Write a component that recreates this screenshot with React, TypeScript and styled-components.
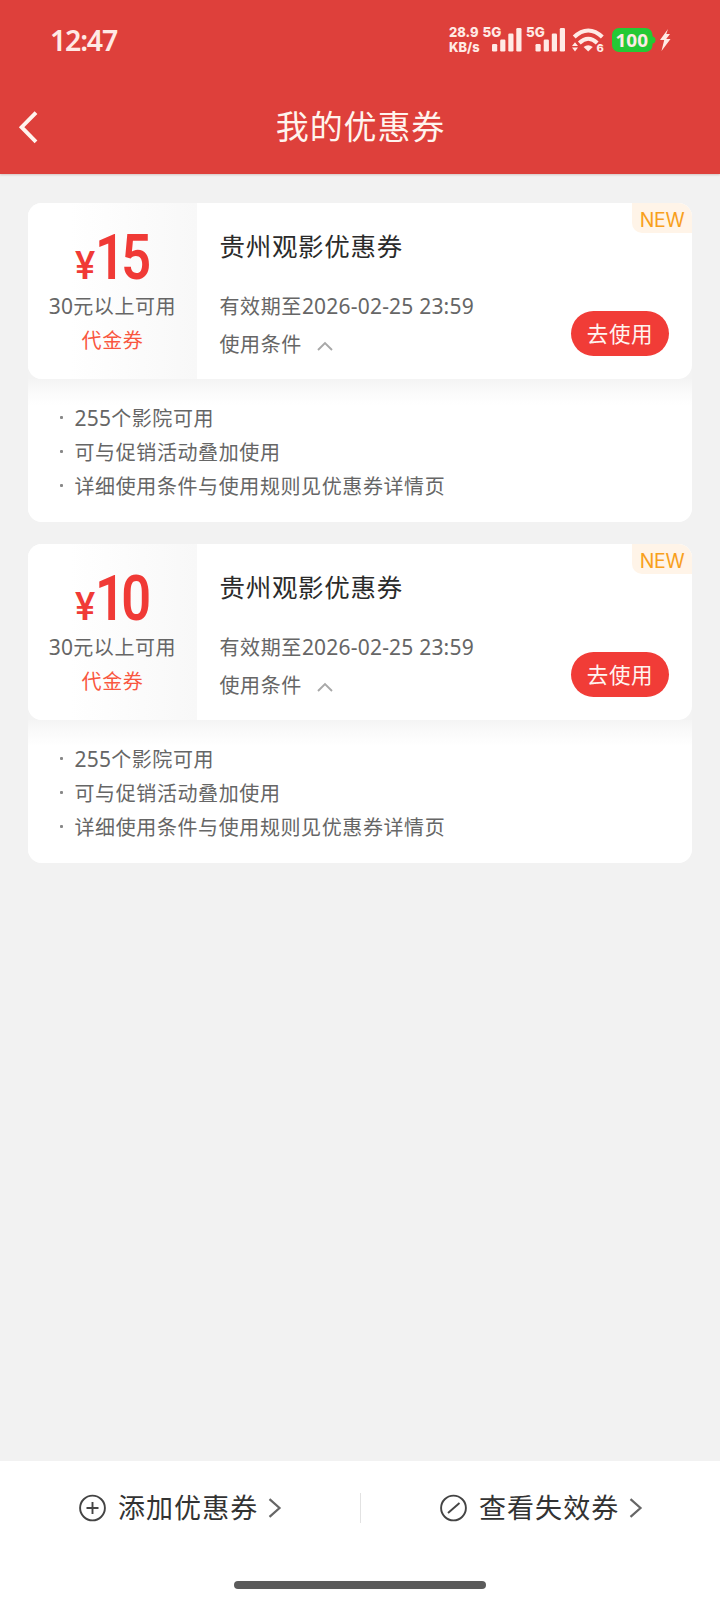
import React from "react";
import styled, { createGlobalStyle } from "styled-components";

const Global = createGlobalStyle`
  *, *::before, *::after { box-sizing: border-box; }
  body {
    margin: 0;
    background: #f2f2f2;
    font-family: "Noto Sans CJK SC", "Noto Sans", sans-serif;
  }
  button { font: inherit; border: 0; background: none; padding: 0; color: inherit; }
`;

const Screen = styled.div`
  width: 720px;
  height: 1600px;
  display: flex;
  flex-direction: column;
  background: #f2f2f2;
  overflow: hidden;
`;

const Header = styled.header`
  flex: none;
  height: 174px;
  background: #de403b;
  box-shadow: 0 1px 2px rgba(120, 60, 50, 0.25);
`;

const StatusBar = styled.div`
  height: 80px;
  padding: 0 48px 0 50px;
  display: flex;
  align-items: center;
  justify-content: space-between;
  color: #ffeae5;
`;

const Clock = styled.div`
  font: 600 28.5px/40px "Noto Sans", sans-serif;
  letter-spacing: -1.2px;
`;

const StatusIcons = styled.div`
  display: flex;
  height: 36px;
`;

const NavBar = styled.div`
  height: 94px;
  padding: 0 18px;
  display: grid;
  grid-template-columns: 22px 1fr 22px;
  align-items: center;
  color: #fff4ee;
`;

const NavTitle = styled.h1`
  margin: 0;
  text-align: center;
  font-size: 33px;
  font-weight: 400;
  line-height: 40px;
  letter-spacing: 0.9px;
  padding: 0 0 4px 1px;
`;

const BackButton = styled.button`
  display: flex;
`;

const List = styled.main`
  flex: 1;
  padding: 29px 28px 0 27.5px;
  display: flex;
  flex-direction: column;
  gap: 22.5px;
`;

const Coupon = styled.article`
  border-radius: 14px;
  background: #fff;
  height: 318.5px;
  display: flex;
  flex-direction: column;
`;

const Ticket = styled.div`
  flex: none;
  height: 176px;
  display: flex;
  border-radius: 14px;
  background: #fff;
  overflow: hidden;
`;

const Rules = styled.ul`
  margin: 0;
  padding: 21.5px 0 0 30px;
  flex: 1;
  list-style: none;
  border-radius: 0 0 14px 14px;
  background: linear-gradient(#f4f4f4, #fafafa 12px, #fff 26px);
`;

const TicketShell = styled.div`
  flex: none;
  border-radius: 14px 14px 0 0;
  background: #f3f3f3;
`;

const ValuePanel = styled.div`
  width: 169px;
  display: flex;
  flex-direction: column;
  align-items: center;
  background: linear-gradient(90deg, #fff 25%, #f8f8f8);
`;

const Amount = styled.div`
  height: 87px;
  display: flex;
  align-items: baseline;
  color: #f03a36;
  font-family: Roboto, sans-serif;
  font-weight: 500;
  line-height: 109px;
`;

const Currency = styled.span`
  font-size: 38px;
  font-weight: 500;
`;

const Digits = styled.span`
  font-size: 63px;
  font-weight: 600;
  letter-spacing: -4.5px;
  width: 54px;
  transform: scaleX(0.83);
  transform-origin: left;
`;

const Threshold = styled.div`
  height: 33px;
  padding-left: 1px;
  font-size: 20px;
  line-height: 32px;
  letter-spacing: 0.6px;
  color: #666;
  white-space: nowrap;
`;

const Kind = styled(Threshold)`
  color: #f9573f;
  line-height: 34px;
`;

const Num = styled.span`
  font-family: "Noto Sans", sans-serif;
  font-size: 21px;
  line-height: 0;
  letter-spacing: 0.2px;
`;

const Detail = styled.div`
  flex: 1;
  display: grid;
  grid-template-columns: 1fr auto;
  padding-left: 23px;
`;

const Info = styled.div`
  display: flex;
  flex-direction: column;
  padding-top: 23px;
`;

const CouponTitle = styled.h2`
  margin: 0;
  font-size: 25.5px;
  font-weight: 400;
  line-height: 37px;
  letter-spacing: 0.7px;
  color: #2b2b2b;
`;

const Meta = styled.div<{ $top: number }>`
  margin-top: ${(p) => p.$top}px;
  display: flex;
  align-items: center;
  height: 32px;
  font-size: 20px;
  line-height: 32px;
  letter-spacing: 0.6px;
  color: #666;
  white-space: nowrap;
`;

const MetaText = styled.span``;

const ChevronUp = styled.svg`
  margin: 4px 0 0 15.5px;
`;

const Side = styled.div`
  display: flex;
  flex-direction: column;
  justify-content: space-between;
  align-items: flex-end;
`;

const NewBadge = styled.span`
  width: 60px;
  height: 30px;
  border-radius: 0 0 0 10px;
  background: #fff4e8;
  color: #f8a01c;
  font: 400 19.5px/35px Inter, sans-serif;
  text-align: center;
  letter-spacing: -0.4px;
`;

const UseButton = styled.button`
  width: 98px;
  height: 45px;
  margin: 0 23px 23px 0;
  border-radius: 23px;
  background: #f13c37;
  color: #fff4f0;
  font-size: 21.5px;
  line-height: 42px;
  letter-spacing: 0.7px;
  text-align: center;
  padding-bottom: 2px;
`;

const Rule = styled.li`
  display: flex;
  height: 34px;
  line-height: 34px;
  font-size: 20px;
  letter-spacing: 0.6px;
  color: #666;

  &::before {
    content: "";
    width: 3px;
    height: 3px;
    border-radius: 1px;
    margin: 15.5px 11.5px 0 2.5px;
    background: #888;
  }
`;

const Footer = styled.footer`
  flex: none;
  height: 139px;
  background: #fff;
  display: flex;
  flex-direction: column;
  align-items: center;
  justify-content: space-between;
  padding-bottom: 11.5px;
`;

const Actions = styled.nav`
  width: 100%;
  height: 94px;
  display: grid;
  grid-template-columns: 360px 1px 1fr;
  align-items: center;
`;

const Divider = styled.i`
  height: 30px;
  background: #e2e2e2;
`;

const Action = styled.button`
  display: flex;
  align-items: center;
  padding-left: 78px;
  color: #333;
  font-size: 27px;
  line-height: 40px;
  letter-spacing: 1.05px;
`;

const ActionLabel = styled.span`
  margin: -2px 10px 0 11px;
`;

const HomeBar = styled.div`
  width: 252px;
  height: 7.5px;
  border-radius: 4px;
  background: #5b5b5b;
`;

const StatusGlyphs = () => (
  <svg width="230" height="36" viewBox="442 22 230 36" fill="#ffeae5">
    <g fontFamily="Inter, sans-serif" fontWeight="800">
      <text x="449" y="36.5" fontSize="13.6" textLength="29.5" lengthAdjust="spacingAndGlyphs">28.9</text>
      <text x="449" y="51.8" fontSize="13.6" textLength="30.5" lengthAdjust="spacingAndGlyphs">KB/s</text>
      <text x="482.5" y="36.5" fontSize="13.8" textLength="18.8" lengthAdjust="spacingAndGlyphs">5G</text>
      <text x="526" y="36.5" fontSize="13.8" textLength="18.8" lengthAdjust="spacingAndGlyphs">5G</text>
    </g>
    {[492, 535.5].map((x) => (
      <g key={x}>
        <rect x={x} y="44" width="5.2" height="7.4" rx="1.2" />
        <rect x={x + 8.2} y="39.5" width="5.2" height="11.9" rx="1.2" />
        <rect x={x + 16.3} y="33.5" width="5.2" height="17.9" rx="1.2" />
        <rect x={x + 24.3} y="28" width="5.2" height="23.4" rx="1.2" />
      </g>
    ))}
    <g fill="none" stroke="#ffeae5" strokeWidth="4">
      <path d="M574.2 37C583 28.2 593.5 28.2 602.3 37" />
      <path d="M579.3 43C585 37.4 591.5 37.4 597.2 43" />
    </g>
    <path d="M583.6 47Q588.2 43.5 592.8 47L588.2 51.6Z" />
    <path d="M572 46l3-3.8 3 3.8zM572 47.5h6l-3 3.9z" />
    <text x="596.5" y="51.8" fontSize="11" fontWeight="800" fontFamily="Inter, sans-serif" stroke="#de403b" strokeWidth="2" paintOrder="stroke">6</text>
    <rect x="612" y="28" width="40.5" height="24" rx="7" fill="#24c934" />
    <path d="M652 36.5q3.5 0 3.5 3.5t-3.5 3.5z" fill="#24c934" />
    <text x="615.5" y="46.7" fontSize="18.5" fontWeight="700" fontFamily="'Noto Sans', sans-serif" textLength="32.5" lengthAdjust="spacingAndGlyphs">100</text>
    <path d="M668 29L660 40h4.2L661.5 51L670.5 39h-4.300L670 34h-3.7z" />
  </svg>
);

const ArrowRight = () => (
  <svg width="14" height="22" viewBox="0 0 14 22" fill="none" stroke="#666" strokeWidth="2.2">
    <path d="M1.5 2.2L11.5 11L1.5 19.8" />
  </svg>
);

const coupons = [{ amount: "15" }, { amount: "10" }];

const CouponCard = ({ amount }: { amount: string }) => (
  <Coupon>
    <TicketShell>
      <Ticket>
        <ValuePanel>
          <Amount>
            <Currency>¥</Currency>
            <Digits>{amount}</Digits>
          </Amount>
          <Threshold><Num>30</Num>元以上可用</Threshold>
          <Kind>代金券</Kind>
        </ValuePanel>
        <Detail>
          <Info>
            <CouponTitle>贵州观影优惠券</CouponTitle>
            <Meta $top={27}>
              <MetaText>有效期至<Num>2026-02-25 23:59</Num></MetaText>
            </Meta>
            <Meta $top={6}>
              <MetaText>使用条件</MetaText>
              <ChevronUp width="16" height="10" viewBox="0 0 16 10" fill="none" stroke="#a8a8a8" strokeWidth="1.9">
                <path d="M1 9L8 2L15 9" />
              </ChevronUp>
            </Meta>
          </Info>
          <Side>
            <NewBadge>NEW</NewBadge>
            <UseButton>去使用</UseButton>
          </Side>
        </Detail>
      </Ticket>
    </TicketShell>
    <Rules>
      <Rule><span><Num>255</Num>个影院可用</span></Rule>
      <Rule>可与促销活动叠加使用</Rule>
      <Rule>详细使用条件与使用规则见优惠券详情页</Rule>
    </Rules>
  </Coupon>
);

export default function App() {
  return (
    <>
      <Global />
      <Screen>
        <Header>
          <StatusBar>
            <Clock>12:47</Clock>
            <StatusIcons><StatusGlyphs /></StatusIcons>
          </StatusBar>
          <NavBar>
            <BackButton aria-label="返回">
              <svg width="22" height="34" viewBox="0 0 22 34" fill="none" stroke="#fff4ee" strokeWidth="3.9">
                <path d="M18 2.6L3.6 17.2L18 31.8" />
              </svg>
            </BackButton>
            <NavTitle>我的优惠券</NavTitle>
          </NavBar>
        </Header>
        <List>
          {coupons.map((c) => <CouponCard key={c.amount} amount={c.amount} />)}
        </List>
        <Footer>
          <Actions>
            <Action>
              <svg width="29" height="28" viewBox="0 0 29 28" fill="none" stroke="#444" strokeWidth="1.9">
                <circle cx="14.5" cy="14" r="12.4" />
                <path d="M8.5 14h12M14.5 8v12" />
              </svg>
              <ActionLabel>添加优惠券</ActionLabel>
              <ArrowRight />
            </Action>
            <Divider />
            <Action>
              <svg width="29" height="28" viewBox="0 0 29 28" fill="none" stroke="#444" strokeWidth="1.9">
                <circle cx="14.5" cy="14" r="12.4" />
                <path d="M9 19L20.5 9" />
              </svg>
              <ActionLabel>查看失效券</ActionLabel>
              <ArrowRight />
            </Action>
          </Actions>
          <HomeBar />
        </Footer>
      </Screen>
    </>
  );
}
